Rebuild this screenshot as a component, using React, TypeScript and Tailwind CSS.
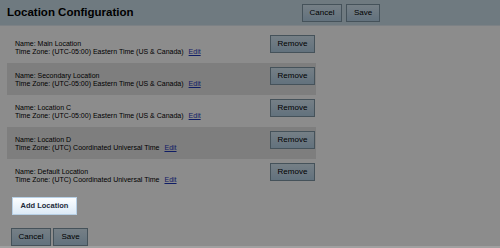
import React from 'react';

type Location = {
  name: string;
  zone: string;
};

const locations: Location[] = [
  { name: 'Main Location', zone: '(UTC-05:00) Eastern Time (US & Canada)' },
  { name: 'Secondary Location', zone: '(UTC-05:00) Eastern Time (US & Canada)' },
  { name: 'Location C', zone: '(UTC-05:00) Eastern Time (US & Canada)' },
  { name: 'Location D', zone: '(UTC) Coordinated Universal Time' },
  { name: 'Default Location', zone: '(UTC) Coordinated Universal Time' },
];

function Btn({ children, className = '' }: { children: React.ReactNode; className?: string }): JSX.Element {
  return (
    <button
      className={
        'h-[18px] border border-[#7e95a5] bg-gradient-to-b from-[#d6e8f4] to-[#b3cfe4] text-[8px] leading-none text-black ' +
        className
      }
    >
      {children}
    </button>
  );
}

export default function App(): JSX.Element {
  return (
    <div className="relative w-[500px] h-[248px] overflow-hidden bg-white border-b-2 border-[#a0a0a0] font-['Liberation_Sans',Arial,sans-serif]">
      <header className="flex h-[26px] items-center justify-between border-b border-[#e2ecf2] bg-[#cadee9] pl-[7px] pr-[120px]">
        <h1 className="text-[11.5px] font-bold text-black">Location Configuration</h1>
        <div className="flex gap-[4px]">
          <Btn className="w-[40px] h-[17px]">Cancel</Btn>
          <Btn className="w-[34px] h-[17px]">Save</Btn>
        </div>
      </header>

      <main className="pl-[7px] pt-[5px]">
        <div className="w-[309px]">
          {locations.map((loc, i) => (
            <div
              key={loc.name}
              className={'flex h-[32px] items-start justify-between pl-[8px] pr-[1px] ' + (i % 2 === 1 ? 'bg-[#e6e6e6]' : '')}
            >
              <div className="mt-[9px] text-[7px] leading-[8px] text-black">
                <div>Name: {loc.name}</div>
                <div>
                  Time Zone: {loc.zone}
                  <a href="#" className="ml-[5px] text-[#1d35b8] underline">
                    Edit
                  </a>
                </div>
              </div>
              <Btn className="mt-[4px] w-[45px]">Remove</Btn>
            </div>
          ))}
        </div>

        <button className="relative z-20 ml-[5px] mt-[1px] h-[18px] w-[65px] border border-[#b7d0e6] bg-gradient-to-b from-[#fbfdff] to-[#dceaf7] text-[7.5px] font-bold leading-none text-[#1c2a3a]">
          Add Location
        </button>

        <div className="ml-[4px] mt-[13px] flex gap-[2px]">
          <Btn className="w-[40px]">Cancel</Btn>
          <Btn className="w-[35px]">Save</Btn>
        </div>
      </main>

      {/* dim layer, Add Location sits above it */}
      <div className="absolute inset-0 z-10 bg-black/45" />
    </div>
  );
}
